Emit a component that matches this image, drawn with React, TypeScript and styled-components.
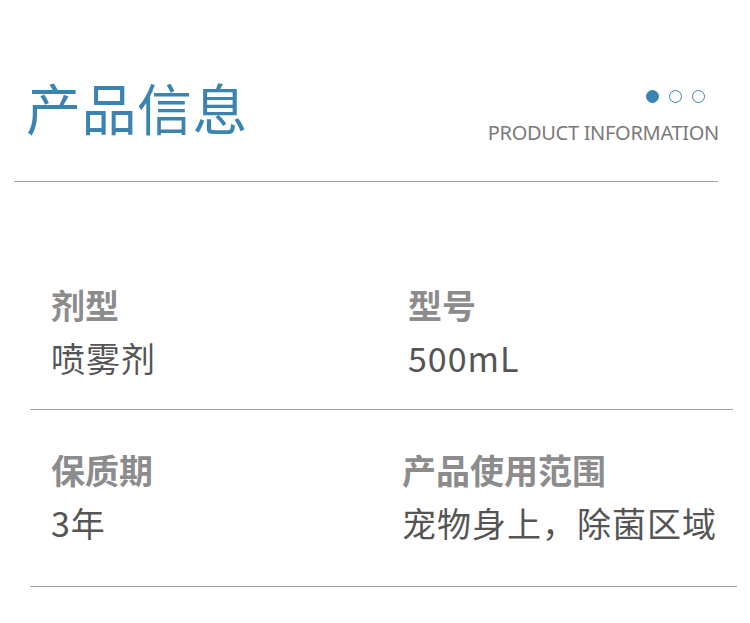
import React from "react";
import styled, { createGlobalStyle } from "styled-components";

const GlobalStyle = createGlobalStyle`
  html, body {
    margin: 0;
    padding: 0;
    background: #ffffff;
  }
  body {
    font-family: "Noto Sans CJK SC", "Noto Sans", sans-serif;
  }
`;

const Page = styled.div`
  width: 750px;
  height: 623px;
  background: #ffffff;
  overflow: hidden;
`;

const Header = styled.div`
  display: flex;
  justify-content: space-between;
  align-items: flex-start;
  padding: 79px 31px 0 26px;
  height: 102px;
`;

const Title = styled.h1`
  margin: 0;
  font-size: 55px;
  line-height: 55px;
  font-weight: 400;
  color: #3b84b1;
  letter-spacing: 0.5px;
`;

const Side = styled.div`
  display: flex;
  flex-direction: column;
  align-items: flex-end;
  padding-top: 11px;
`;

const Dots = styled.div`
  display: flex;
  gap: 10px;
  margin-right: 14px;
`;

const Dot = styled.span<{ $active?: boolean }>`
  width: 13px;
  height: 13px;
  box-sizing: border-box;
  border-radius: 50%;
  border: 1.5px solid #3b84b1;
  background: ${(p) => (p.$active ? "#3b84b1" : "#ffffff")};
`;

const Subtitle = styled.div`
  margin-top: 18px;
  font-family: "Noto Sans", "Open Sans", sans-serif;
  font-size: 20px;
  line-height: 24px;
  color: #7a7a7a;
  letter-spacing: -0.3px;
`;

const Divider = styled.div<{ $left: number; $right: number }>`
  height: 1px;
  background: #a3a3a3;
  margin-left: ${(p) => p.$left}px;
  margin-right: ${(p) => p.$right}px;
`;

const Row = styled.div<{ $top: number; $bottom: number }>`
  display: grid;
  grid-template-columns: 351px 1fr;
  padding: ${(p) => p.$top}px 0 ${(p) => p.$bottom}px 51px;
`;

const Cell = styled.div<{ $shift?: number }>`
  display: flex;
  flex-direction: column;
  gap: 13px;
  margin-left: ${(p) => p.$shift ?? 0}px;
`;

const Label = styled.div`
  font-size: 34px;
  line-height: 40px;
  font-weight: 700;
  color: #8c8c8c;
`;

const Value = styled.div`
  font-size: 34px;
  line-height: 40px;
  font-weight: 400;
  color: #555555;
  letter-spacing: 1px;
`;

const rows = [
  {
    top: 103,
    bottom: 31,
    cells: [
      { label: "剂型", value: "喷雾剂", shift: 0 },
      { label: "型号", value: "500mL", shift: 6 },
    ],
  },
  {
    top: 40,
    bottom: 43,
    cells: [
      { label: "保质期", value: "3年", shift: 0 },
      { label: "产品使用范围", value: "宠物身上，除菌区域", shift: 0 },
    ],
  },
];

export default function App() {
  return (
    <Page>
      <GlobalStyle />
      <Header>
        <Title>产品信息</Title>
        <Side>
          <Dots>
            <Dot $active />
            <Dot />
            <Dot />
          </Dots>
          <Subtitle>PRODUCT INFORMATION</Subtitle>
        </Side>
      </Header>
      <Divider $left={14} $right={32} />
      {rows.map((row, i) => (
        <React.Fragment key={i}>
          <Row $top={row.top} $bottom={row.bottom}>
            {row.cells.map((c) => (
              <Cell key={c.label} $shift={c.shift}>
                <Label>{c.label}</Label>
                <Value>{c.value}</Value>
              </Cell>
            ))}
          </Row>
          <Divider $left={30} $right={i === 0 ? 17 : 13} />
        </React.Fragment>
      ))}
    </Page>
  );
}
